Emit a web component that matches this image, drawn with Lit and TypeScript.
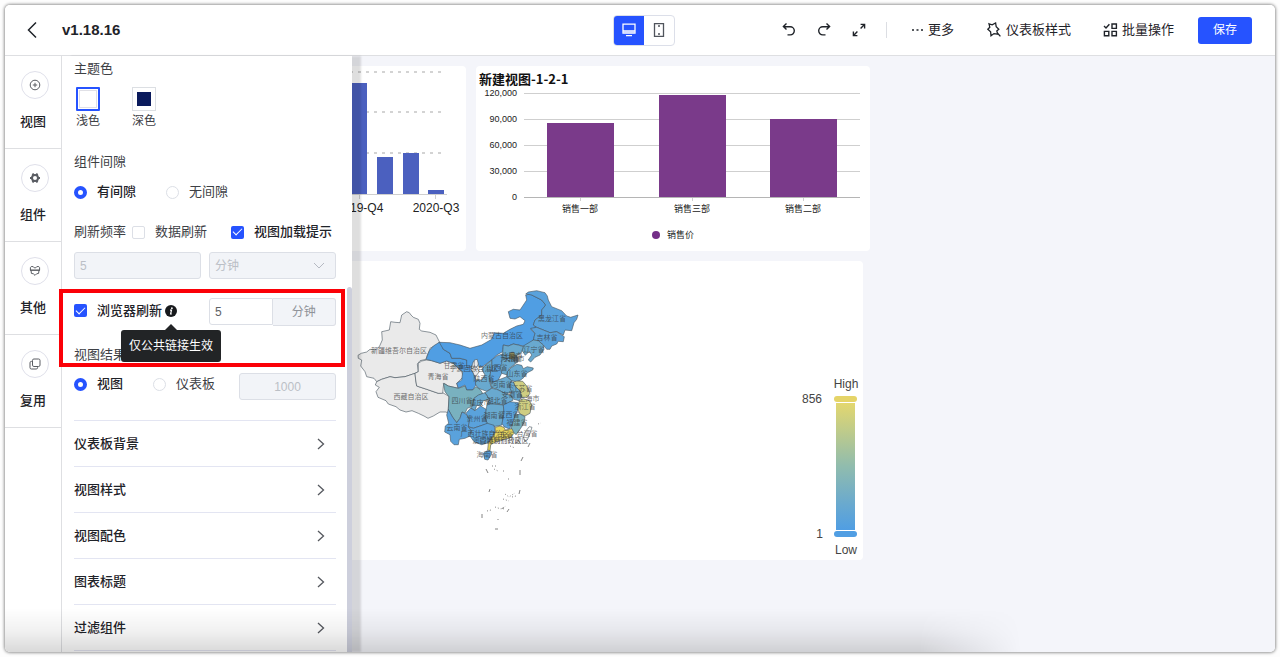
import { LitElement, html, svg, css } from "lit";
import { customElement } from "lit/decorators.js";

const sans = css`"Liberation Sans", "Noto Sans CJK SC", sans-serif`;

const HORIZON = "#509ee3";
const BLUE = "#5aa2dc";
const TEAL = "#69a9cf";
const SEA = "#79b1bf";
const EMPTY = "#eaeaea";
const OLIVE = "#cfce82";
const YELLOW = "#e8d65f";

/* Province outlines on a grid of thirds of a pixel. */
const provinces: [string, string][] = [
  [EMPTY, "170,95 178,98 183,105 190,112 205,118 210,130 208,148 215,153 240,157 258,165 268,185 265,192 240,205 238,212 232,225 228,238 210,242 202,252 205,275 195,280 165,290 135,293 120,290 95,298 80,305 72,295 50,290 45,275 32,258 35,240 25,235 24,226 34,220 50,216 60,208 75,210 88,200 97,180 95,155 118,150 122,125 135,127 150,128 155,105"],
  [EMPTY, "80,305 95,298 120,290 135,293 165,290 195,280 197,300 200,318 230,328 265,340 278,338 290,345 297,350 295,385 298,402 288,396 270,396 250,408 234,415 222,408 205,400 186,392 168,396 150,390 138,380 115,372 108,362 84,352 78,335 88,322 76,315"],
  [EMPTY, "205,250 215,243 230,240 245,242 270,250 290,243 310,250 335,275 340,290 320,310 325,325 295,318 283,310 280,320 278,340 265,340 230,328 200,318 197,300 195,280 205,275"],
  [HORIZON, "268,187 275,190 280,208 300,220 305,235 330,235 350,240 352,262 365,262 370,280 376,290 378,315 368,330 350,330 345,315 325,325 320,310 335,300 338,275 310,250 290,243 270,250 245,242 228,238 238,212 250,198"],
  [HORIZON, "268,187 300,188 330,195 360,205 395,195 425,178 433,158 460,160 480,148 500,138 520,133 525,122 510,110 495,117 480,115 475,95 490,88 510,90 530,60 527,45 540,42 575,60 587,75 575,90 575,105 555,120 550,135 560,142 542,148 555,160 550,180 535,195 520,198 505,195 490,192 475,198 460,195 458,215 440,225 425,240 400,258 388,262 380,240 370,245 365,260 350,262 350,240 330,235 305,235 300,220 280,208"],
  [BLUE, "527,42 535,36 560,32 585,38 592,48 595,60 605,80 635,92 650,108 662,112 684,105 680,118 672,128 665,152 645,150 640,165 620,155 600,158 580,150 560,142 550,135 555,120 575,105 575,90 587,75 575,60 545,45"],
  [BLUE, "542,145 560,142 580,150 600,158 620,155 643,170 640,185 625,184 620,192 605,198 600,208 590,208 580,195 565,182 550,180 555,160"],
  [TEAL, "520,198 550,180 565,182 580,195 582,208 570,225 555,232 542,246 535,240 545,225 538,214 526,226 515,210"],
  [TEAL, "460,195 475,198 490,192 505,195 520,200 514,218 500,226 503,240 492,255 478,265 472,285 455,280 450,260 455,235 458,215"],
  ["#8a8a5c", "478,220 490,216 497,226 490,238 478,236"],
  ["#6f8fa0", "495,230 503,232 504,246 496,250 491,240"],
  [BLUE, "425,240 440,228 457,222 455,250 450,260 455,280 445,300 422,310 418,290 425,265"],
  [TEAL, "400,262 425,240 425,265 418,290 420,310 425,325 410,334 385,325 376,312 378,300 395,300 405,285 395,268"],
  [EMPTY, "373,240 382,238 385,252 380,262 388,275 375,292 368,275 362,268 372,262"],
  [TEAL, "472,275 485,262 500,253 515,256 520,266 532,260 550,264 548,270 532,278 522,292 512,300 500,305 485,302 470,290"],
  [TEAL, "422,310 445,300 470,290 485,302 480,318 485,335 470,342 440,328 425,322"],
  [OLIVE, "490,306 500,303 518,304 532,320 540,340 532,352 515,352 510,332 496,320"],
  [TEAL, "482,305 490,306 496,320 510,332 514,352 508,362 492,358 480,345 485,335 478,320"],
  [TEAL, "405,338 425,325 440,328 470,342 483,347 490,360 465,374 430,372 412,372 418,358"],
  [SEA, "280,310 295,318 325,325 345,318 350,330 368,330 378,320 390,328 398,340 372,355 368,378 352,385 345,400 336,396 330,415 320,428 308,412 295,390 297,350 285,335"],
  [TEAL, "385,345 405,338 418,358 400,362 392,378 380,376 375,392 362,384 368,378 372,355"],
  [TEAL, "412,372 430,372 460,375 462,400 456,435 430,440 412,432 405,410 408,388"],
  [BLUE, "460,375 480,365 505,368 506,385 496,405 488,430 478,447 462,440 456,430 462,400"],
  [OLIVE, "508,362 520,356 538,362 545,375 540,400 525,408 510,402 503,388"],
  [SEA, "496,405 510,402 525,410 522,428 512,445 498,464 482,448 488,430"],
  [BLUE, "362,384 375,392 392,378 408,388 405,410 412,432 390,438 370,445 355,440 358,418 348,400"],
  [BLUE, "295,388 308,412 320,428 330,415 336,396 348,402 358,418 355,440 364,452 360,468 345,475 328,478 325,494 312,494 302,484 300,464 284,456 286,438 296,430 290,405"],
  [BLUE, "355,440 370,445 390,438 412,430 432,436 436,455 425,472 415,488 395,494 372,485 360,468 364,452"],
  [YELLOW, "436,442 450,438 462,442 466,450 486,446 492,460 480,474 462,478 440,484 422,494 420,512 413,510 415,490 428,470 436,458"],
  [BLUE, "400,520 412,512 424,514 424,524 414,540 404,538"],
  ["#ffffff", "538,440 546,442 540,460 532,480 524,484 520,470 528,452"],
];

const provinceNames: [string, number, number][] = [
  ["新疆维吾尔自治区", 148, 212], ["西藏自治区", 182, 351], ["青海省", 265, 290],
  ["甘肃省", 313, 258], ["宁夏回族自治区", 372, 267], ["内蒙古自治区", 456, 168],
  ["黑龙江省", 605, 117], ["吉林省", 590, 174], ["辽宁省", 552, 209],
  ["北京市", 487, 229], ["天津市", 493, 238], ["河北省", 482, 236],
  ["山西省", 442, 265], ["陕西省", 402, 297], ["山东省", 501, 282],
  ["河南省", 456, 316], ["江苏省", 516, 326], ["安徽省", 486, 344],
  ["上海市", 538, 356], ["湖北省", 440, 362], ["重庆市", 390, 370],
  ["四川省", 336, 362], ["浙江省", 524, 382], ["江西省", 478, 406],
  ["湖南省", 432, 408], ["贵州省", 380, 417], ["云南省", 322, 444],
  ["福建省", 502, 428], ["台湾省", 532, 461], ["广西壮族自治区", 406, 463],
  ["广东省", 458, 466], ["澳门特别行政区", 440, 483], ["香港特别行政区", 462, 483], ["海南省", 412, 525],
];

@customElement("app-header")
class AppHeader extends LitElement {
  static styles = css`
    :host {
      display: grid;
      grid-template-columns: 1fr auto 1fr;
      align-items: center;
      height: 50px;
      padding: 0 23px 0 21px;
      border-bottom: 1px solid #dedfe2;
      background: #fff;
      color: #1f2329;
      font: 13px/20px ${sans};
    }
    button {
      display: flex;
      align-items: center;
      justify-content: center;
      padding: 0;
      border: 0;
      background: none;
      color: inherit;
      font: inherit;
    }
    svg { display: block; fill: none; stroke: currentColor; }
    .lead { display: flex; align-items: center; gap: 24px; }
    h1 { margin: 0; font-size: 15px; font-weight: 700; }
    .devices {
      display: flex;
      margin-left: 10px;
      border: 1px solid #dcdfe9;
      border-radius: 4px;
      overflow: hidden;
    }
    .devices button { width: 30px; height: 29px; color: #50545c; }
    .devices .on { background: #2653ff; color: #fff; }
    .tools { display: flex; align-items: center; justify-content: flex-end; }
    .history { display: flex; gap: 19px; padding-right: 19px; }
    .links { display: flex; gap: 32px; padding: 0 24px; border-left: 1px solid #dcdee3; height: 16px; }
    .links button { gap: 4px; white-space: nowrap; }
    .save {
      width: 54px;
      height: 27px;
      border-radius: 3px;
      background: #2653ff;
      color: #fff;
      font-size: 12px;
    }
  `;
  render() {
    return html`
      <div class="lead">
        <button aria-label="返回">
          <svg width="12" height="18" viewBox="0 0 12 18" stroke-width="1.5"><path d="M10 1.5 2.500 9l7.500 7.500" /></svg>
        </button>
        <h1>v1.18.16</h1>
      </div>
      <div class="devices">
        <button class="on" aria-label="电脑">
          <svg width="16" height="16" viewBox="0 0 16 16" stroke-width="1.3">
            <path d="M2 2.2h12v9H2zM2 8.8h12M5 13.6h6" />
            <path d="M2.5 9h11v2h-11z" fill="currentColor" stroke="none" opacity=".6" />
          </svg>
        </button>
        <button aria-label="手机">
          <svg width="14" height="16" viewBox="0 0 14 16" stroke-width="1.3">
            <path d="M2.5 1.6h9v12.8h-9z" /><path d="M6 4h2M6 12h2" stroke-width="1.6" />
          </svg>
        </button>
      </div>
      <div class="tools">
        <div class="history">
          <button aria-label="撤销">
            <svg width="16" height="16" viewBox="0 0 16 16" stroke-width="1.4">
              <path d="M5.5 1.6 2.4 4.6l3.1 3M2.6 4.7h6.6a4.1 4.1 0 0 1 0 8.2H6.5" />
            </svg>
          </button>
          <button aria-label="重做">
            <svg width="16" height="16" viewBox="0 0 16 16" stroke-width="1.4">
              <path d="m10.5 1.6 3.1 3-3.1 3M13.4 4.7H6.8a4.1 4.1 0 0 0 0 8.2h2.7" />
            </svg>
          </button>
          <button aria-label="全屏">
            <svg width="16" height="16" viewBox="0 0 16 16" stroke-width="1.4">
              <path d="M9.6 2.4h4v4M13.4 2.6 9.6 6.4M6.4 13.6h-4v-4M2.6 13.4l3.8-3.8" />
            </svg>
          </button>
        </div>
        <div class="links">
          <button>
            <svg width="13" height="14" viewBox="0 0 13 14"><path d="M1 7h2M5.5 7h2M10 7h2" stroke-width="1.6" /></svg>更多
          </button>
          <button>
            <svg width="16" height="16" viewBox="0 0 16 16" stroke-width="1.3">
              <path d="m3 1.8 3.2 1.1L9.6 1l.6 3.7 2.6 2.5-2 1.8 1 3.2-3.8-.6-3 2.2-.4-4-2.8-2.6 2-2zM11.4 11l3 3.4" />
            </svg>仪表板样式
          </button>
          <button>
            <svg width="15" height="14" viewBox="0 0 15 14" stroke-width="1.4">
              <path d="M9 1h4.4v4.4H9zM1.4 8.4h4.4v4.4H1.4zM9 8.4h4.4v4.4H9zM1 3l2 2 3.4-3.8" />
            </svg>批量操作
          </button>
        </div>
        <button class="save">保存</button>
      </div>
    `;
  }
}

@customElement("side-rail")
class SideRail extends LitElement {
  static styles = css`
    :host {
      display: flex;
      flex-direction: column;
      border-right: 1px solid #dedfe2;
      background: #fff;
      font: 500 13px/20px ${sans};
      color: #1f2329;
    }
    button {
      display: flex;
      flex-direction: column;
      align-items: center;
      gap: 13px;
      height: 93px;
      padding: 15px 0 0;
      border: 0;
      border-bottom: 1px solid #dedfe2;
      background: none;
      color: inherit;
      font: inherit;
    }
    .ring {
      display: grid;
      place-items: center;
      width: 26px;
      height: 26px;
      margin-left: 4px;
      border: 1px solid #dfe0ea;
      border-radius: 50%;
      color: #5a5d63;
    }
    svg { display: block; fill: none; stroke: currentColor; }
  `;
  render() {
    const items = [
      ["视图", svg`<circle cx="7" cy="7" r="4.8" /><path d="M7 4.8v4.4M4.8 7h4.4" />`],
      ["组件", svg`<circle cx="7" cy="7" r="3" stroke-width="2" /><path d="M4.600 2.600 5.600 4.400M9.400 2.600 8.400 4.400M4.600 11.400 5.600 9.600M9.400 11.400 8.400 9.600M2 7h2M10 7h2" stroke-width="2" />`],
      ["其他", svg`<path d="M3.2 2.6h2l1 1.2h1.600l1-1.200h2l.8 1V6.200H2.400V3.600zM3 6.200l.4 3.200 2 .4L7 11.400l1.600-1.600 2-.4.4-3.200M2 6.200h10" />`],
      ["复用", svg`<rect x="4.5" y="2" width="7.5" height="7.5" rx="1.4" /><path d="M4 4.4H3.4A1.4 1.4 0 0 0 2 5.8v4.8A1.4 1.4 0 0 0 3.4 12h4.8a1.4 1.4 0 0 0 1.4-1.4V10" />`],
    ];
    return items.map(([label, icon]) => html`
      <button>
        <span class="ring"><svg width="14" height="14" viewBox="0 0 14 14">${icon}</svg></span>
        <span>${label}</span>
      </button>
    `);
  }
}

@customElement("style-panel")
class StylePanel extends LitElement {
  static styles = css`
    :host {
      display: block;
      position: relative;
      min-height: 0;
      background: #fff;
      box-shadow: 9px 0 2px rgba(0, 0, 0, 0.13);
      color: #3d4045;
      font: 13px/20px ${sans};
    }
    * { box-sizing: border-box; }
    .scroll { height: 100%; padding: 0 16px 0 12px; overflow: hidden; }
    .thumb {
      position: absolute;
      right: 0;
      top: 231px;
      bottom: 0;
      width: 5px;
      border-radius: 3px 3px 0 0;
      background: #cdcfdc;
    }
    .mark {
      position: absolute;
      left: -3px;
      top: 233px;
      width: 286px;
      height: 78px;
      border: 4px solid #fb0007;
      pointer-events: none;
    }
    h2 { margin: 0; font-size: 13px; line-height: 20px; font-weight: 400; }
    .theme h2 { padding: 3px 0; }
    .swatches { display: flex; gap: 32px; margin: 5px 0 21px 2px; font-size: 12px; }
    .swatch { display: flex; flex-direction: column; align-items: center; padding: 0; border: 0; background: none; color: inherit; font: inherit; }
    .chip { display: grid; place-items: center; width: 24px; height: 24px; border: 1px solid #dcdfe3; }
    .chip::before { content: ""; width: 16px; height: 16px; border: 1px solid #e0e0e6; }
    .chosen .chip { border: 2px solid #2653ff; border-radius: 1px; }
    .dark .chip::before { width: 14px; height: 14px; background: #0a1a5c; border: 0; }
    .options { display: flex; gap: 30px; }
    .gaps { margin: 10px 0 20px; }
    label { display: flex; align-items: center; gap: 10px; white-space: nowrap; }
    label.on { font-weight: 500; color: #1f2329; }
    input[type="radio"], input[type="checkbox"] {
      appearance: none;
      flex: none;
      width: 13px;
      height: 13px;
      margin: 0;
      border: 1px solid #dcdfe6;
      background: #fff;
    }
    input[type="radio"] { border-radius: 50%; }
    input[type="radio"]:checked { border: 4px solid #2653ff; }
    input[type="checkbox"] { border-radius: 2px; }
    input[type="checkbox"]:checked {
      border: 0;
      background: #2653ff;
      display: grid;
      place-items: center;
    }
    input[type="checkbox"]:checked::before {
      content: "";
      width: 8px;
      height: 4px;
      margin-bottom: 3px;
      border: solid #fff;
      border-width: 0 0 1px 1px;
      rotate: -45deg;
    }
    .refresh { display: flex; gap: 24px; }
    .refresh > div { display: flex; gap: 6px; }
    .pair { display: grid; grid-template-columns: 1fr 1fr; gap: 8px; }
    .interval { margin: 10px 0 19px; }
    .field {
      width: 100%;
      height: 27px;
      padding: 0 5px;
      border: 1px solid #dcdfe6;
      border-radius: 3px;
      background: #fff;
      color: #606266;
      font: 12px/20px ${sans};
    }
    .field:disabled { background: #f2f4f8; color: #bbbfc6; opacity: 1; }
    .picker { position: relative; }
    .picker select { appearance: none; }
    .picker svg { position: absolute; right: 11px; top: 10px; fill: none; stroke: #b5b9c2; }
    .browser { align-items: start; margin-bottom: 19px; }
    .named { display: flex; align-items: center; gap: 3px; height: 25px; }
    .info { position: relative; }
    .info svg { display: block; }
    .tip {
      position: absolute;
      top: 25px;
      left: 50%;
      translate: -50% 0;
      z-index: 2;
      padding: 6px 8px;
      border-radius: 3px;
      background: #222426;
      color: #fff;
      font-size: 12px;
      line-height: 20px;
      white-space: nowrap;
    }
    .tip::before {
      content: "";
      position: absolute;
      bottom: 100%;
      left: 50%;
      translate: -50% 0;
      border: 6px solid transparent;
      border-top: 0;
      border-bottom-color: #222426;
    }
    .joined { display: grid; grid-template-columns: 1fr 1fr; }
    .joined input { border-radius: 3px 0 0 3px; }
    .unit {
      border: 1px solid #dcdfe6;
      border-left: 0;
      border-radius: 0 3px 3px 0;
      background: #f2f4f8;
      color: #909399;
      font-size: 12px;
      line-height: 26px;
      text-align: center;
    }
    .result { display: flex; justify-content: space-between; align-items: flex-start; margin: 8px 0 20px; }
    .result .options { height: 22px; }
    .result .field { width: 97px; text-align: center; }
    .fold {
      display: flex;
      align-items: center;
      justify-content: space-between;
      width: 100%;
      height: 46px;
      padding: 0 10px 0 0;
      border: 0;
      border-top: 1px solid #e3e5f2;
      background: none;
      color: #1f2329;
      font: 500 13px/20px ${sans};
    }
    .fold svg { fill: none; stroke: #55585e; stroke-width: 1.3; }
    .end { border-top: 1px solid #e3e5f2; }
  `;
  render() {
    const folds = ["仪表板背景", "视图样式", "视图配色", "图表标题", "过滤组件"];
    return html`
      <div class="scroll">
        <section class="theme">
          <h2>主题色</h2>
          <div class="swatches">
            <button class="swatch chosen"><span class="chip"></span>浅色</button>
            <button class="swatch dark"><span class="chip"></span>深色</button>
          </div>
        </section>
        <h2>组件间隙</h2>
        <div class="options gaps">
          <label class="on"><input type="radio" name="gap" checked />有间隙</label>
          <label><input type="radio" name="gap" />无间隙</label>
        </div>
        <div class="refresh">
          <div><h2>刷新频率</h2><label><input type="checkbox" />数据刷新</label></div>
          <label class="on"><input type="checkbox" checked />视图加载提示</label>
        </div>
        <div class="pair interval">
          <input class="field" type="text" value="5" aria-label="刷新间隔" disabled />
          <div class="picker">
            <select class="field" aria-label="时间单位" disabled><option>分钟</option></select>
            <svg width="12" height="8" viewBox="0 0 12 8"><path d="m1 1 5 5 5-5" /></svg>
          </div>
        </div>
        <div class="pair browser">
          <div class="named">
            <label class="on"><input type="checkbox" checked />浏览器刷新</label>
            <span class="info">
              <svg width="12" height="12" viewBox="0 0 12 12">
                <circle cx="6" cy="6" r="6" fill="#17191c" />
                <circle cx="6.9" cy="3.2" r=".9" fill="#fff" />
                <path d="M5 5.2h1.5L5.6 9h1.2" fill="none" stroke="#fff" stroke-width="1.2" />
              </svg>
              <span class="tip" role="tooltip">仅公共链接生效</span>
            </span>
          </div>
          <div class="joined">
            <input class="field" type="text" value="5" aria-label="浏览器刷新间隔" />
            <span class="unit">分钟</span>
          </div>
        </div>
        <h2>视图结果展示</h2>
        <div class="result">
          <div class="options">
            <label class="on"><input type="radio" name="result" checked />视图</label>
            <label><input type="radio" name="result" />仪表板</label>
          </div>
          <input class="field" type="text" value="1000" aria-label="展示数量" disabled />
        </div>
        ${folds.map((name) => html`
          <button class="fold">
            ${name}
            <svg width="10" height="12" viewBox="0 0 10 12"><path d="m2 1 5.5 5L2 11" /></svg>
          </button>
        `)}
        <div class="end"></div>
      </div>
      <div class="thumb"></div>
      <div class="mark"></div>
    `;
  }
}

@customElement("dash-board")
class DashBoard extends LitElement {
  static styles = css`
    :host {
      display: block;
      padding: 10px;
      background: #f4f5fa;
      overflow: hidden;
      font-family: ${sans};
    }
    .board { display: grid; grid-template-columns: 1fr 1fr; gap: 10px; max-width: 798px; }
    .card { border-radius: 4px; background: #fff; overflow: hidden; }
    .wide { grid-column: 1 / -1; margin-right: 7px; }
    svg { display: block; width: 100%; height: auto; }
    .small { font-size: 9px; fill: #222; }
    .axis { font-size: 12px; fill: #222; }
    .scale { font-size: 12px; fill: #444; }
    .title { font: 700 13px "Noto Sans CJK SC", sans-serif; fill: #111; }
    .place { font-size: 7px; fill: #333; fill-opacity: 0.7; }
    .mid { text-anchor: middle; }
    .end { text-anchor: end; }
    .rule { stroke: #cfcfcf; }
    .base { stroke: #b5b5b5; }
    .dots { stroke: #d3d3d3; stroke-width: 2; stroke-dasharray: 3 5; }
    .province { stroke: #44535c; stroke-width: 0.6; stroke-linejoin: round; }
    .islet { stroke: #666; stroke-width: 0.8; fill: none; }
  `;

  quarters() {
    const bars = [[351, 83], [377, 157], [403, 153], [428, 190]];
    return html`
      <svg viewBox="72 66 394 185">
        ${[72, 112, 153].map((y) => svg`<path class="dots" d="M350 ${y}H446" />`)}
        ${bars.map(([x, y]) => svg`<rect x=${x} y=${y} width="16" height=${195 - y} fill="#4b60bf" />`)}
        <path class="rule" d="M352 194.5H447M359.5 195v4M435.5 195v4" />
        <text class="axis mid" x="360" y="212">2019-Q4</text>
        <text class="axis mid" x="436" y="212">2020-Q3</text>
      </svg>
    `;
  }

  sales() {
    const ticks: [string, number][] = [["120,000", 93], ["90,000", 119], ["60,000", 145], ["30,000", 171]];
    const bars: [string, number, number][] = [["销售一部", 547, 123], ["销售三部", 659, 95], ["销售二部", 770, 119]];
    return html`
      <svg viewBox="476 66 394 185">
        ${ticks.map(([t, y]) => svg`
          <path class="rule" d="M524 ${y + 0.5}H860" />
          <text class="small end" x="517" y=${y + 3}>${t}</text>`)}
        <text class="small end" x="517" y="200">0</text>
        ${bars.map(([t, x, y]) => svg`
          <rect x=${x} y=${y} width="67" height=${197 - y} fill="#7a3a8a" />
          <path class="rule" d="M${x + 33.5} 197v4" />
          <text class="small mid" x=${x + 33} y="212">${t}</text>`)}
        <path class="base" d="M524 197.5H860" />
        <text class="title" x="479" y="84">新建视图-1-2-1</text>
        <circle cx="656" cy="235" r="4" fill="#742f88" />
        <text class="small" x="667" y="238">销售价</text>
      </svg>
    `;
  }

  map() {
    const third = (points: string) =>
      points.split(" ").map((p) => {
        const [x, y] = p.split(",").map(Number);
        return `${(350 + x / 3).toFixed(1)},${(280 + y / 3).toFixed(1)}`;
      }).join(" ");
    return html`
      <svg viewBox="72 261 791 299">
        <defs>
          <linearGradient id="heat" x1="0" y1="0" x2="0" y2="1">
            <stop offset="0" stop-color="#e3d76f" />
            <stop offset=".5" stop-color="#90bcae" />
            <stop offset=".8" stop-color="#69a9cf" />
            <stop offset="1" stop-color="#509ee3" />
          </linearGradient>
        </defs>
        ${provinces.map(([fill, points]) => svg`<polygon class="province" fill=${fill} points=${third(points)} />`)}
        <path class="islet" d="M530 443l-2 4M523 457l-2 4M520 470v5M520 490l-1 4M486 469l2 4M490 489l-1 3M482 514v4M509 509l-2 3M495 529h3M502 508l2 1" />
        <path class="islet" stroke-dasharray="1 2" d="M492 466h6M494 469l4 2M503 471h2M508 479h1M505 494l4 3 6-4M503 499l6 2M495 507l6 2 5-3M487 511l4-1M498 519v2M512 497l4-1M538 424l3-1M510 446l5 2" />
        ${provinceNames.map(([name, x, y]) => svg`
          <text class="place mid" x=${Math.round(350 + x / 3)} y=${Math.round(282 + y / 3)}>${name}</text>`)}
        <text class="scale mid" x="846" y="388">High</text>
        <text class="scale end" x="822" y="403">856</text>
        <text class="scale end" x="823" y="538">1</text>
        <text class="scale mid" x="846" y="554">Low</text>
        <rect x="836" y="403" width="19" height="127" fill="url(#heat)" />
        <rect x="834" y="396" width="23" height="6" rx="3" fill="#e5d468" />
        <rect x="834" y="531" width="23" height="6" rx="3" fill="#509ee3" />
      </svg>
    `;
  }

  render() {
    return html`
      <div class="board">
        <div class="card">${this.quarters()}</div>
        <div class="card">${this.sales()}</div>
        <div class="card wide">${this.map()}</div>
      </div>
    `;
  }
}

@customElement("app-root")
class AppRoot extends LitElement {
  static styles = css`
    :host {
      display: block;
      box-sizing: border-box;
      height: 100vh;
      padding: 5px;
      background: #fdfdfd;
    }
    .window {
      position: relative;
      display: grid;
      grid-template-rows: auto minmax(0, 1fr);
      height: 100%;
      border-radius: 5px;
      background: #fff;
      box-shadow: 0 0 3px 1px rgba(0, 0, 0, 0.4);
      overflow: hidden;
    }
    .body { display: grid; grid-template-columns: 57px 290px minmax(0, 1fr); grid-template-rows: minmax(0, 1fr); }
    side-rail { grid-area: 1 / 1; }
    dash-board { grid-area: 1 / 2 / 2 / 4; }
    style-panel { grid-area: 1 / 2; }
    .shade {
      position: absolute;
      inset: auto 0 0 0;
      height: 44px;
      background: linear-gradient(transparent, rgba(0, 0, 0, 0.05) 50%, rgba(0, 0, 0, 0.15));
      mask-image: linear-gradient(to right, #000 72%, transparent 80%);
      pointer-events: none;
    }
  `;
  render() {
    return html`
      <div class="window">
        <app-header></app-header>
        <div class="body">
          <side-rail></side-rail>
          <dash-board></dash-board>
          <style-panel></style-panel>
        </div>
        <div class="shade"></div>
      </div>
    `;
  }
}
